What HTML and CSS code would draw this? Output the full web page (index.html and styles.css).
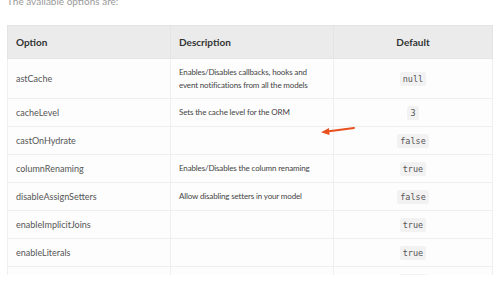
FILE: index.html
```html
<!DOCTYPE html>
<html>
<head>
<meta charset="utf-8">
<link rel="stylesheet" href="styles.css">
</head>
<body>
<div class="page">
  <p class="intro">The available options are:</p>
  <div class="table-wrap">
    <table class="opts">
      <thead>
        <tr><th class="c-opt">Option</th><th class="c-desc">Description</th><th class="c-def">Default</th></tr>
      </thead>
      <tbody>
        <tr class="tall"><td>astCache</td><td class="desc">Enables/Disables callbacks, hooks and event notifications from all the models</td><td class="def"><code>null</code></td></tr>
        <tr><td>cacheLevel</td><td class="desc">Sets the cache level for the ORM</td><td class="def"><code>3</code></td></tr>
        <tr><td>castOnHydrate</td><td class="desc"></td><td class="def"><code>false</code></td></tr>
        <tr><td>columnRenaming</td><td class="desc">Enables/Disables the column renaming</td><td class="def"><code>true</code></td></tr>
        <tr><td>disableAssignSetters</td><td class="desc">Allow disabling setters in your model</td><td class="def"><code>false</code></td></tr>
        <tr><td>enableImplicitJoins</td><td class="desc"></td><td class="def"><code>true</code></td></tr>
        <tr><td>enableLiterals</td><td class="desc"></td><td class="def"><code>true</code></td></tr>
        <tr><td>escapeIdentifiers</td><td class="desc"></td><td class="def"><code>true</code></td></tr>
      </tbody>
    </table>
    <svg class="arrow" width="40" height="14" viewBox="0 0 40 14">
      <path d="M35 5 L8 8.5" stroke="#e8501e" stroke-width="2" stroke-linecap="round" fill="none"/>
      <path d="M2 9.2 L10 5 L10.5 12 Z" fill="#e8501e"/>
    </svg>
  </div>
</div>
</body>
</html>
```
FILE: styles.css
```css
html, body {
  margin: 0;
  padding: 0;
  background: #ffffff;
  overflow: hidden;
}
.page {
  width: 500px;
  height: 283px;
  padding: 0 7px;
  box-sizing: border-box;
  font-family: Lato, "Open Sans", sans-serif;
  color: #444;
}
.intro {
  margin: -8px 0 0 0;
  height: 33px;
  font-size: 10px;
  line-height: 18px;
  color: #9a9a9a;
}
.table-wrap {
  position: relative;
}
.opts {
  width: 486px;
  border-collapse: collapse;
  table-layout: fixed;
  font-size: 9px;
}
.opts th {
  background: #ebebeb;
  height: 32px;
  padding: 0 8px;
  font-size: 10px;
  font-weight: 700;
  color: #333;
  text-align: left;
  border: 1px solid #e4e4e4;
}
.opts th.c-opt { width: 146px; }
.opts th.c-desc { width: 146px; }
.opts th.c-def { text-align: center; }
.opts td {
  height: 28px;
  padding: 0 8px;
  box-sizing: border-box;
  background: #fdfdfd;
  border: 1px solid #efefef;
  color: #555;
  line-height: 13px;
  vertical-align: middle;
}
.opts td.desc {
  font-size: 8px;
  letter-spacing: -0.15px;
  color: #444;
}
.opts tr.tall td { height: 40px; }
.opts td.def { text-align: center; }
.opts code {
  font-family: "DejaVu Sans Mono", "Liberation Mono", monospace;
  font-size: 8.5px;
  color: #555;
  background: #f2f2f2;
  padding: 2px 3px;
  border-radius: 2px;
}
.arrow {
  position: absolute;
  left: 312px;
  top: 98px;
}
```
